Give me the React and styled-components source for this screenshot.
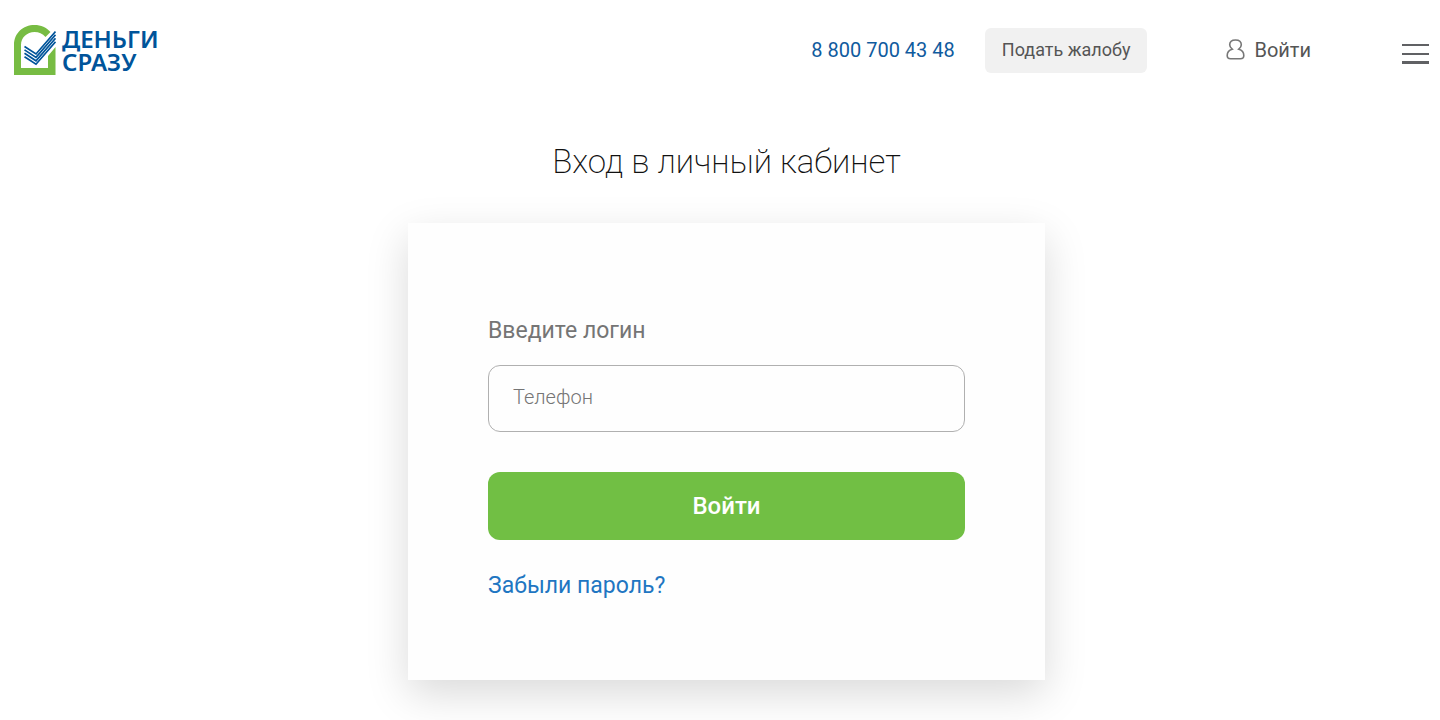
import React, { useState } from "react";
import styled, { createGlobalStyle } from "styled-components";

const GlobalStyle = createGlobalStyle`
  * {
    box-sizing: border-box;
  }

  body {
    margin: 0;
    background: #fff;
    font-family: Roboto, "Liberation Sans", sans-serif;
    color: #222;
  }

  button,
  input {
    font-family: inherit;
  }

  a {
    text-decoration: none;
  }
`;

const Header = styled.header`
  display: flex;
  align-items: center;
  height: 100px;
  padding: 0 11px 0 14px;
`;

const LogoLink = styled.a`
  display: flex;
  align-items: center;
  gap: 6px;
  margin-right: auto;
`;

const LogoText = styled.span`
  font-family: "Noto Sans", "Open Sans", sans-serif;
  font-size: 24px;
  font-weight: 600;
  line-height: 23px;
  color: #00549a;
`;

const LogoLine = styled.span`
  display: block;
`;

const Phone = styled.a`
  margin-right: 30px;
  font-size: 20px;
  line-height: 24px;
  color: #105b9e;
`;

const ComplaintButton = styled.button`
  height: 45px;
  margin-right: 79px;
  padding: 0 17px 2px;
  border: none;
  border-radius: 6px;
  background: #f1f1f1;
  font-size: 18px;
  color: #555;
  cursor: pointer;
`;

const LoginLink = styled.a`
  display: flex;
  align-items: center;
  gap: 9px;
  margin-right: 91px;
  font-size: 20px;
  line-height: 24px;
  color: #555;

  svg {
    margin-bottom: 2px;
  }
`;

const MenuButton = styled.button`
  display: flex;
  padding: 8px 0 0;
  border: none;
  background: none;
  color: #606164;
  cursor: pointer;
`;

const Main = styled.main`
  display: flex;
  flex-direction: column;
  align-items: center;
  padding: 40px 0 40px 13px;
`;

const Title = styled.h1`
  margin: 0 0 39px;
  font-size: 33px;
  font-weight: 200;
  line-height: 44px;
  color: #111;
`;

const Card = styled.form`
  display: flex;
  flex-direction: column;
  width: 100%;
  max-width: 637px;
  padding: 92px 80px 80px;
  background: #fefefe;
  box-shadow: 0 14px 40px rgba(0, 0, 0, 0.15);
`;

const Label = styled.label`
  padding-top: 1px;
  margin-bottom: 19px;
  font-size: 23px;
  line-height: 30px;
  color: #757575;
`;

const Input = styled.input`
  height: 67px;
  margin-bottom: 40px;
  padding: 0 24px 3px;
  border: 1px solid #b0b0b0;
  border-radius: 12px;
  background: transparent;
  font-size: 20px;
  font-weight: 300;
  color: #333;

  &::placeholder {
    color: #757575;
    opacity: 1;
  }
`;

const SubmitButton = styled.button`
  height: 68px;
  margin-bottom: 31px;
  border: none;
  border-radius: 12px;
  background: #71bf44;
  font-size: 24px;
  font-weight: 500;
  color: #fff;
  cursor: pointer;
`;

const ForgotLink = styled.a`
  align-self: flex-start;
  font-size: 23px;
  line-height: 29px;
  color: #1f76c2;
`;

const LogoMark = () => (
  <svg width="42" height="50" viewBox="0 0 42 50" aria-hidden="true">
    <path
      d="M0 50V20C0 8 9 0 20.500 0C27 0 32.500 2.500 36.500 7L31.500 12C28.500 8.500 25 7 20.500 7C13 7 7 12.500 7 20V43H34V31L41.500 22V50Z"
      fill="#77bc43"
    />
    <g fill="none" stroke="#00549a" strokeWidth="1.700">
      <path d="M10.500 21.500L22 29L41.500 6.500" />
      <path d="M10.500 24.900L22 32.400L41.500 9.900" />
      <path d="M10.500 28.300L22 35.800L41.500 13.300" />
      <path d="M10.500 31.700L22 39.200L41.500 16.700" />
    </g>
  </svg>
);

const UserIcon = () => (
  <svg width="19" height="21" viewBox="0 0 19 21" aria-hidden="true">
    <path
      d="M6.200 10.200C4.500 8.800 3.700 7.400 3.700 5.800C3.700 2.800 6.200 1 9.500 1C12.800 1 15.300 2.800 15.300 5.800C15.300 7.400 14.500 8.800 12.800 10.200C15.800 11 17.800 13.500 17.800 16.500C17.800 18.800 16.800 19.800 14.500 19.800H4.500C2.200 19.800 1.200 18.800 1.200 16.500C1.200 13.500 3.200 11 6.200 10.200Z"
      fill="none"
      stroke="#777"
      strokeWidth="1.600"
    />
  </svg>
);

const MenuIcon = () => (
  <svg width="27" height="20" viewBox="0 0 27 20" fill="currentColor" aria-hidden="true">
    <rect width="27" height="2" />
    <rect y="9" width="27" height="2" />
    <rect y="17" width="27" height="3" />
  </svg>
);

export default function App() {
  const [phone, setPhone] = useState("");

  return (
    <>
      <GlobalStyle />
      <Header>
        <LogoLink href="#">
          <LogoMark />
          <LogoText>
            <LogoLine>ДЕНЬГИ</LogoLine>
            <LogoLine>СРАЗУ</LogoLine>
          </LogoText>
        </LogoLink>
        <Phone href="tel:88007004348">8 800 700 43 48</Phone>
        <ComplaintButton type="button">Подать жалобу</ComplaintButton>
        <LoginLink href="#login">
          <UserIcon />
          Войти
        </LoginLink>
        <MenuButton type="button" aria-label="Меню">
          <MenuIcon />
        </MenuButton>
      </Header>
      <Main>
        <Title>Вход в личный кабинет</Title>
        <Card id="login" onSubmit={(e) => e.preventDefault()}>
          <Label htmlFor="phone">Введите логин</Label>
          <Input
            id="phone"
            type="tel"
            placeholder="Телефон"
            value={phone}
            onChange={(e) => setPhone(e.target.value)}
          />
          <SubmitButton type="submit">Войти</SubmitButton>
          <ForgotLink href="#forgot">Забыли пароль?</ForgotLink>
        </Card>
      </Main>
    </>
  );
}
